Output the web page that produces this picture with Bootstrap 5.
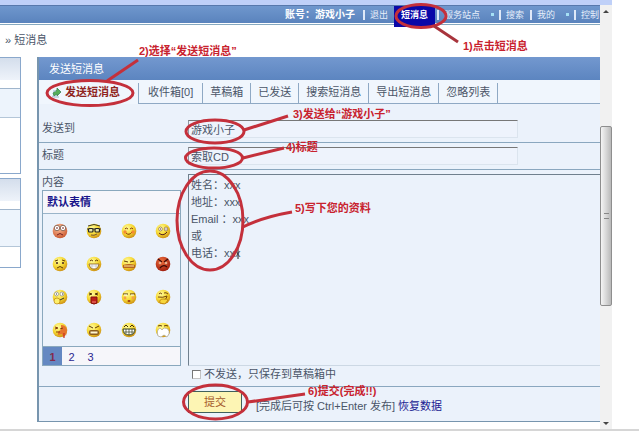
<!DOCTYPE html>
<html lang="zh-CN">
<head>
<meta charset="utf-8">
<meta name="viewport" content="width=device-width, initial-scale=1">
<title>发送短消息</title>
<link href="https://cdn.jsdelivr.net/npm/bootstrap@5.3.0/dist/css/bootstrap.min.css" rel="stylesheet">
<style>
body{font-family:"Liberation Sans","Noto Sans CJK SC",sans-serif;font-size:11px;line-height:16px;color:#4a5568;background:#fff}
a{text-decoration:none;color:inherit}
.shell{min-height:100vh;border-bottom:2px solid #d6d6d6}
.viewport{margin-right:27px;border-top:5px solid #bfd0f8}
.page-area{min-width:0}
.topbar{height:18px;background:linear-gradient(#6f97cd,#5a83bd);color:#e6eefa;font-size:9px;border-top:1px solid #5778ac;white-space:nowrap}
.topbar .account{font-size:10px;color:#fff}
.topbar .item{padding:0 6px 0 5px}
.topbar .item.bar{border-left:2px solid #dfe9f8;line-height:10px}
.topbar .last{padding-right:1px}
.topbar .more::after{content:"";display:inline-block;width:3px;height:3px;margin:0 0 2px 11px;background:#a5e0f5}
.topbar .more{padding-right:5px}
.topbar .current{background:#0a08a8;color:#fff;align-self:flex-start;height:21px;width:41px;line-height:18px;margin-right:2px;text-align:center}
.subline{height:2px;border-bottom:1px solid #86a9c0}
.crumb{height:32px;padding:7px 0 0 5px}
.side{width:21px}
.side-box{border:1px solid #8aa8cc;border-left:0}
.side-box .cap{background:linear-gradient(#d4deec,#eef3fa);height:22px}
.side-box .mid{border-top:1px solid #9fb5cc;border-bottom:1px solid #b4c6d8;background:#edf4fc}
.side-box .gap-top{height:8px}
.side-box .first{height:30px}
.side-box .rest-a{height:55px}
.side-box .second{height:38px}
.side-box .rest-b{height:20px}
.panel{margin-left:16px;border:1px solid #7795ae;border-width:0 0 1px 2px;background:#ebf2fb;min-width:0}
.panel-title{height:23px;background:linear-gradient(#7398cf,#5c85c0);color:#fff;font-size:11px;line-height:24px;padding-left:10px;margin:0;font-weight:400}
.tabs{height:24px;background:#f0f6fd;white-space:nowrap}
.tabs a{padding:0 7px;margin-top:3px;border-right:1px solid #8fa9c4;border-bottom:1px solid #8fa9c4;height:21px;line-height:19px}
.tabs .on{width:100px;color:#8f2420;font-weight:700;border-bottom:0;padding:0 0 0 13px}
.tabs .inbox{padding:0 9px}
.tabs .rest{border-bottom:1px solid #8fa9c4}
.line{border-bottom:1px solid #8aa7bf}
.row-to{min-height:39px}
.row-subject{min-height:27px}
.name{width:149px;padding-left:3px;flex:none}
.value{min-width:0}
.field{width:80%;height:18px;font-size:11px;line-height:16px;padding:0 2px;color:#4a5568;background:#eef3fc;border:1px solid #dbe4ee;border-top-color:#777;border-left-color:#8f98a2;border-radius:0;display:block}
.field:focus{outline:0}
.editor{height:192px;width:100%;resize:none;border:1px solid #70808e;border-width:1px 0 1px 1px;border-bottom-color:#ccd8e4;background:#ebf2fb;color:#4a5568;line-height:17px;padding:2px;display:block;overflow:hidden}
.faces{width:139px;border:1px solid #8aa8bd}
.faces h2{font-size:11px;font-weight:700;color:#16128a;height:23px;line-height:22px;padding-left:4px;margin:0;background:#f6f6fa;border-bottom:1px solid #9ab4c9}
.face-grid{display:grid;grid-template-columns:repeat(4,1fr);grid-auto-rows:33px;place-items:center}
.face-grid svg{width:16px;height:16px;display:block}
.pages{height:19px;border-top:1px solid #8aa8bd;background:#f6f6fa;color:#2a2690;line-height:20px;text-align:center}
.pages a{width:19px}
.pages .on{background:#6488c2;color:#842a4c}
.tick{appearance:none;width:9px;height:9px;margin:0 3px 0 4px;border:1px solid #c3c3c3;border-top-color:#777;border-left-color:#777;background:#fff}
.send{width:54px;height:22px;background:#fdf5b4;border:1px solid #40605c;color:#a55a2c;font-size:11px;line-height:18px;padding:0}
.hint{line-height:14px;padding:8px 0 0 14px}
.restore{color:#211c92}
.scroller{width:12px;background:#f1f1f1;flex:none}
.scroller svg{width:12px;height:12px;display:block}
.thumb{height:180px;margin-top:109px;border:1px solid #8e8e8e;border-radius:2px;background:linear-gradient(90deg,#f5f5f5,#d2d2d2 60%,#b9b9b9)}
.grip{width:5px;height:6px;border:1px solid #888;border-width:1px 0}
.notes{position:absolute;left:0;top:0;width:100%;pointer-events:none}
.notes svg{position:absolute;left:0;top:0}
.notes span{position:absolute;color:#c8222e;font-size:11px;font-weight:700;line-height:12px;white-space:nowrap}
.n1{left:463px;top:40px}.n2{left:139px;top:45px}.n3{left:293px;top:108px}
.n4{left:286px;top:141px}.n5{left:295px;top:202px}.n6{left:308px;top:385px}
</style>
<script src="https://cdn.jsdelivr.net/npm/bootstrap@5.3.0/dist/js/bootstrap.bundle.min.js"></script>
</head>
<body>
<svg width="0" height="0" class="position-absolute" aria-hidden="true">
<defs>
<radialGradient id="gold" cx=".38" cy=".3" r=".75"><stop offset="0" stop-color="#fffb9a"/><stop offset=".55" stop-color="#f6d832"/><stop offset="1" stop-color="#c98a12"/></radialGradient>
<radialGradient id="rosy" cx=".4" cy=".3" r=".75"><stop offset="0" stop-color="#ffc09a"/><stop offset="1" stop-color="#c8552c"/></radialGradient>
<radialGradient id="fury" cx=".4" cy=".3" r=".75"><stop offset="0" stop-color="#f0703c"/><stop offset="1" stop-color="#9c1a0c"/></radialGradient>
<symbol id="ball" viewBox="0 0 16 16"><circle cx="8" cy="8" r="7.3" fill="url(#gold)"/></symbol>
</defs>
</svg>
<div class="shell d-flex flex-column position-relative overflow-hidden">
<div class="viewport d-flex flex-grow-1">
<div class="page-area flex-grow-1">
  <nav class="topbar d-flex align-items-center justify-content-end">
    <strong class="account me-2">账号：游戏小子</strong>
    <a class="item bar" href="#">退出</a>
    <a class="current fw-bold" href="#">短消息</a>
    <a class="item bar more" href="#">服务站点</a>
    <a class="item bar" href="#">搜索</a>
    <a class="item bar more" href="#">我的</a>
    <a class="item bar last" href="#">控制</a>
  </nav>
  <div class="subline"></div>
  <div class="crumb">» 短消息</div>
  <div class="d-flex align-items-start">
    <aside class="side">
      <div class="side-box"><div class="cap"></div><div class="gap-top"></div><div class="mid first"></div><div class="rest-a"></div></div>
      <div class="side-box mt-1"><div class="cap"></div><div class="gap-top"></div><div class="mid second"></div><div class="rest-b"></div></div>
    </aside>
    <main class="panel flex-grow-1">
      <h1 class="panel-title">发送短消息</h1>
      <nav class="tabs d-flex">
        <a class="on d-flex" href="#"><svg class="mt-1 me-1" width="9" height="11" viewBox="0 0 9 11" aria-hidden="true"><path d="M1 6 5 3V1l4 4-4 4V7L2 9Z" fill="#57ad5a" stroke="#347b50" stroke-width=".7"/><path d="M1 4h3M0 9l2 1h5" stroke="#9eb4cf" fill="none"/></svg>发送短消息</a>
        <a class="inbox" href="#">收件箱[0]</a><a href="#">草稿箱</a><a href="#">已发送</a><a href="#">搜索短消息</a><a href="#">导出短消息</a><a href="#">忽略列表</a>
        <div class="rest flex-grow-1"></div>
      </nav>
      <form>
        <div class="line row-to d-flex pt-3">
          <label class="name" for="to">发送到</label>
          <div class="value flex-grow-1"><input class="field" id="to" value="游戏小子"></div>
        </div>
        <div class="line row-subject d-flex pt-1">
          <label class="name" for="subject">标题</label>
          <div class="value flex-grow-1"><input class="field" id="subject" value="索取CD"></div>
        </div>
        <div class="line d-flex pt-1">
          <div class="name">
            <label for="text" class="d-block">内容</label>
            <section class="faces">
              <h2>默认表情</h2>
              <div class="face-grid" aria-hidden="true">
                <svg viewBox="0 0 16 16"><circle cx="8" cy="8" r="7.3" fill="url(#rosy)"/><g fill="#fff" stroke="#754" stroke-width=".8"><circle cx="5" cy="5" r="2.7"/><circle cx="11" cy="5" r="2.7"/></g><path d="M4 5h2M10 5h2M5 12q3-3 6 0" stroke="#722" fill="none"/></svg>
                <svg viewBox="0 0 16 16"><use href="#ball"/><path d="M2 3q6-3 12 0M1 6h14" stroke="#443f25" fill="none"/><g fill="#e8e6a5" stroke="#222" stroke-width="1.2"><rect x="2.5" y="5.5" width="4.5" height="3.5" rx="1"/><rect x="9" y="5.5" width="4.5" height="3.5" rx="1"/></g><path d="M5 12q3 1 6-1" stroke="#753" fill="none"/></svg>
                <svg viewBox="0 0 16 16"><use href="#ball"/><path d="M4 6q1-2 3 0M9 6q2-2 3 0M5 10q3 3 6-1" stroke="#853b08" fill="none"/><circle cx="4" cy="9" r="1.7" fill="#f48b34"/><circle cx="12" cy="9" r="1.7" fill="#f48b34"/></svg>
                <svg viewBox="0 0 16 16"><use href="#ball"/><g fill="#fff" stroke="#764b10" stroke-width=".6"><ellipse cx="5.5" cy="6" rx="1.8" ry="2"/><ellipse cx="11" cy="6" rx="1.8" ry="2"/></g><path d="M5 6h1M10.500 6h1M4 10q4 4 8-1" stroke="#522" fill="none"/></svg>
                <svg viewBox="0 0 16 16"><use href="#ball"/><path d="M3 5l3-1M10 4l3 1M5 12q3-3 6 0" stroke="#633c08" fill="none"/><circle cx="5" cy="7" r="1" fill="#422"/><circle cx="11" cy="7" r="1" fill="#422"/></svg>
                <svg viewBox="0 0 16 16"><use href="#ball"/><path d="M4 5q1-2 3 0M9 5q2-2 3 0" stroke="#633c08" fill="none"/><path d="M3 8h10q-1 5-5 5T3 8Z" fill="#fff" stroke="#875c20" stroke-width=".8"/><path d="M6 8v4M10 8v4M4 10h8" stroke="#aaa" stroke-width=".5"/></svg>
                <svg viewBox="0 0 16 16"><use href="#ball"/><path d="M3 5l4 1M9 6l4-1" stroke="#633c08" fill="none"/><path d="M2 9q6-2 12 0v3H2Z" fill="#b8641a"/><path d="M3 10h10" stroke="#ffe99a"/></svg>
                <svg viewBox="0 0 16 16"><circle cx="8" cy="8" r="7.3" fill="url(#fury)"/><path d="M3 3l4 3M13 3 9 6M5 12q3-4 7-1" stroke="#3c0906" stroke-width="1.3" fill="none"/><circle cx="5" cy="7" r="1.3" fill="#e8b090"/><circle cx="11" cy="7" r="1.3" fill="#e8b090"/></svg>
                <svg viewBox="0 0 16 16"><use href="#ball"/><g fill="#fff" stroke="#777" stroke-width=".6"><circle cx="4.500" cy="5" r="2"/><circle cx="10" cy="5" r="2"/></g><path d="M4 5h1M10 5h1M8 11l4-2" stroke="#333"/><circle cx="5" cy="12" r="3" fill="#fff06a" stroke="#b88112" stroke-width=".7"/></svg>
                <svg viewBox="0 0 16 16"><use href="#ball"/><path d="M3 4l3 1-3 1M12 4 9 5l3 1" stroke="#4f3008" fill="none"/><path d="M5 8h6v6q-3 2-6 0Z" fill="#bd2018" stroke="#811"/><path d="M6 13h4" stroke="#f58072"/></svg>
                <svg viewBox="0 0 16 16"><use href="#ball"/><path d="M2 5h5M9 5h5" stroke="#4f3008"/><path d="M3 6h3M10 6h3" stroke="#fff"/><ellipse cx="8" cy="12" rx="1.500" ry="1" fill="#a13d10"/><circle cx="4" cy="9" r="1.400" fill="#f6a046"/><circle cx="12" cy="9" r="1.400" fill="#f6a046"/></svg>
                <svg viewBox="0 0 16 16"><use href="#ball"/><path d="M4 5q1-2 3 0M9 4q2-1 4 1M3 8q5 1 9-1-1 5-6 4" stroke="#74430a" fill="none"/><path d="M5 14q-1-4 3-4t5 1l-3 4Z" fill="#f7d63b" stroke="#b1750d" stroke-width=".7"/></svg>
                <svg viewBox="0 0 16 16"><use href="#ball"/><path d="M9 3q5 0 6 5l-1 6-1-2-1 4-2-4-4 1q-1-4 3-5Z" fill="#e6752d"/><path d="M3 5l3 1-3 1M8 7l3-1M4 10h4" stroke="#853d0d" fill="none"/><path d="M12 11v5" stroke="#c52318"/></svg>
                <svg viewBox="0 0 16 16"><use href="#ball"/><path d="M3 4l4 2M13 4 9 6" stroke="#633c08"/><rect x="3" y="8" width="10" height="5" rx="2" fill="#8a5c1c"/><path d="M4.500 10.500h7" stroke="#fff4ce" stroke-width="2"/></svg>
                <svg viewBox="0 0 16 16"><use href="#ball"/><path d="M3 5l2-2 2 2M9 5l2-2 2 2" stroke="#443008" fill="none"/><path d="M2 7h12q0 6-6 6T2 7Z" fill="#fff" stroke="#35401b"/><path d="M5 7v5M8 7v6M11 7v5M3 10h10" stroke="#35401b" stroke-width=".7"/></svg>
                <svg viewBox="0 0 16 16"><use href="#ball"/><path d="M3 4q2-1 4 0M9 4q2-1 4 0" stroke="#633c08" fill="none"/><path d="M3 14q-2-6 2-8l2 2 2-2q6 0 5 6l-2 3-3-2-3 2Z" fill="#fff" stroke="#a6a394" stroke-width=".7"/></svg>
              </div>
              <nav class="pages d-flex"><a class="on fw-bold" href="#">1</a><a href="#">2</a><a href="#">3</a></nav>
            </section>
          </div>
          <div class="value flex-grow-1">
            <textarea class="editor" id="text">姓名：xxx
地址：xxx
Email ：xxx
或
电话：xxx</textarea>
            <div class="d-flex align-items-center pb-1"><input class="tick" type="checkbox" id="draft"><label for="draft">不发送，只保存到草稿箱中</label></div>
          </div>
        </div>
        <div class="d-flex align-items-start pt-1 pb-2">
          <div class="name"></div>
          <button class="send" type="button">提交</button>
          <div class="hint">[完成后可按 Ctrl+Enter 发布] <a class="restore" href="#">恢复数据</a></div>
        </div>
      </form>
    </main>
  </div>
</div>
<div class="scroller d-flex flex-column">
  <svg viewBox="0 0 12 12" aria-hidden="true"><path d="M3 8l3-3 3 3Z" fill="#444"/></svg>
  <div class="thumb d-flex align-items-center justify-content-center"><div class="grip"></div></div>
  <svg class="mt-auto" viewBox="0 0 12 12" aria-hidden="true"><path d="M3 5h6L6 8Z" fill="#444"/></svg>
</div>
</div>
<div class="notes">
  <svg width="639" height="431" viewBox="0 0 639 431" fill="none" stroke="#c4303b" stroke-width="3" aria-hidden="true">
    <path d="M238 248v11" stroke="#222" stroke-width="1"/>
    <ellipse cx="421" cy="16" rx="25" ry="11.500"/><path d="M434 26l24 16" stroke="#a8343c"/>
    <ellipse cx="90" cy="93" rx="43" ry="12.500"/><path d="M107 81l31-21"/>
    <ellipse cx="215" cy="131.500" rx="29" ry="11.500"/><path d="M244 130l44-14"/>
    <ellipse cx="214" cy="158" rx="28.500" ry="10"/><path d="M243 158l41-10"/>
    <ellipse cx="210" cy="220.500" rx="33" ry="49.500"/><path d="M243 227q20-10 49-15"/>
    <ellipse cx="215.500" cy="402" rx="32" ry="17"/><path d="M248 402l57-8"/>
  </svg>
  <span class="n1">1)点击短消息</span><span class="n2">2)选择“发送短消息”</span><span class="n3">3)发送给“游戏小子”</span>
  <span class="n4">4)标题</span><span class="n5">5)写下您的资料</span><span class="n6">6)提交(完成!!)</span>
</div>
</div>
</body>
</html>
